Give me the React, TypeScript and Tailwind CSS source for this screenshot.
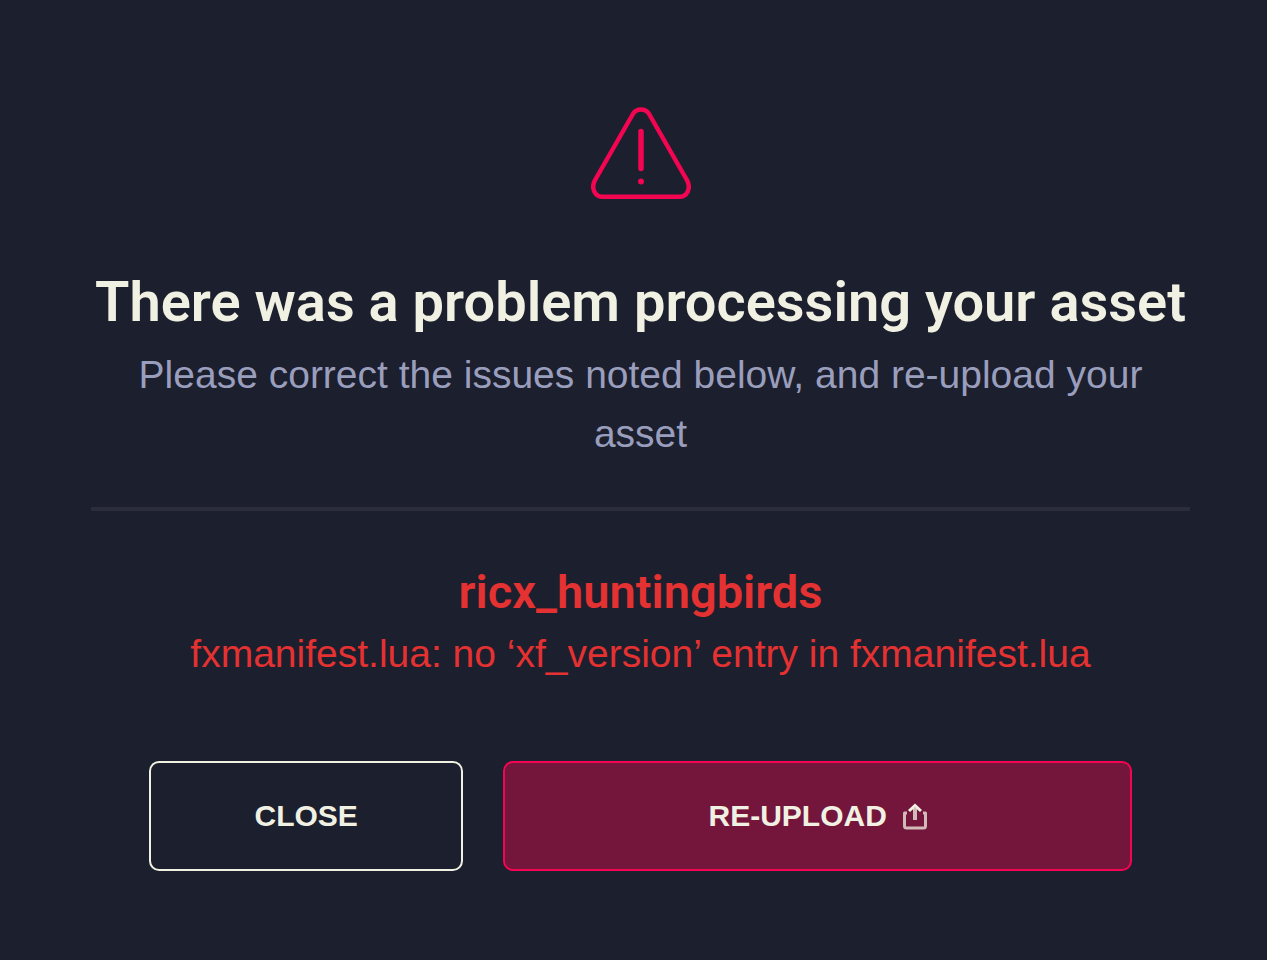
import { useState } from "react";

interface AssetIssue {
  asset: string;
  message: string;
}

const issues: AssetIssue[] = [
  {
    asset: "ricx_huntingbirds",
    message: "fxmanifest.lua: no ‘xf_version’ entry in fxmanifest.lua",
  },
];

const WarningIcon = () => (
  <svg width="100" height="93" viewBox="0 0 100 93" fill="none" stroke="#f40552" aria-hidden="true">
    <path
      d="M42.2 6.5 3.8 73.5C-.2 81.5 4 89.8 12 89.8H88C96 89.8 100.2 81.5 96.2 73.5L57.8 6.5C54.3 1.3 45.7 1.3 42.2 6.5Z"
      strokeWidth="4.5"
      strokeLinejoin="round"
    />
    <path d="M50 24.5V61.5" strokeWidth="5.5" strokeLinecap="round" />
    <circle cx="50" cy="74.5" r="3" fill="#f40552" stroke="none" />
  </svg>
);

const UploadIcon = () => (
  <svg width="24" height="27" viewBox="0 0 24 27" fill="none" stroke="#f1f1e3" aria-hidden="true">
    <path
      d="M4 10H1.5V23Q1.5 25 3.5 25H20.5Q22.5 25 22.5 23V10H20"
      strokeWidth="3"
      strokeLinejoin="round"
      opacity="0.75"
    />
    <path d="M12 17V5" strokeWidth="4" opacity="0.75" />
    <path d="M6 8 12 2.5 18 8" strokeWidth="3" />
  </svg>
);

const App = () => {
  const [isOpen, setIsOpen] = useState(true);

  if (!isOpen) {
    return <div className="min-h-screen bg-[#1c1f2d]" />;
  }

  return (
    <main className="min-h-screen bg-[#1c1f2d] pt-[107px] pr-[77px] pb-[88px] pl-[91px] font-['Liberation_Sans',Arial,sans-serif] text-center">
      <div className="flex justify-center">
        <WarningIcon />
      </div>

      <h1 className="mt-[72px] font-[Roboto,sans-serif] text-[56px] leading-[60px] font-semibold text-[#f1f1e3]">
        There was a problem processing your asset
      </h1>
      <p className="mt-[13px] px-10 text-[39px] leading-[59px] text-[#9a9ebd]">
        Please correct the issues noted below, and re-upload your asset
      </p>

      <hr className="mt-[44px] border-t-4 border-[#2b2d3c]" />

      <section className="mt-[53px] text-[#e43131]">
        {issues.map((issue) => (
          <div key={issue.asset}>
            <h2 className="font-[Roboto,sans-serif] text-[47px] leading-[56px] font-semibold">{issue.asset}</h2>
            <p className="mt-1 text-[39px] leading-[59px]">{issue.message}</p>
          </div>
        ))}
      </section>

      <div className="mt-[78px] grid grid-cols-[1fr_2fr] gap-10 px-[58px] text-[30px] leading-9 font-bold text-[#f1f1e3]">
        <button
          type="button"
          onClick={() => setIsOpen(false)}
          className="h-[110px] rounded-[10px] border-2 border-[#f1f1e3]"
        >
          CLOSE
        </button>
        <button
          type="button"
          className="flex h-[110px] items-center justify-center gap-4 rounded-[10px] border-2 border-[#f40552] bg-[#74163c]"
        >
          RE-UPLOAD
          <UploadIcon />
        </button>
      </div>
    </main>
  );
};

export default App;
